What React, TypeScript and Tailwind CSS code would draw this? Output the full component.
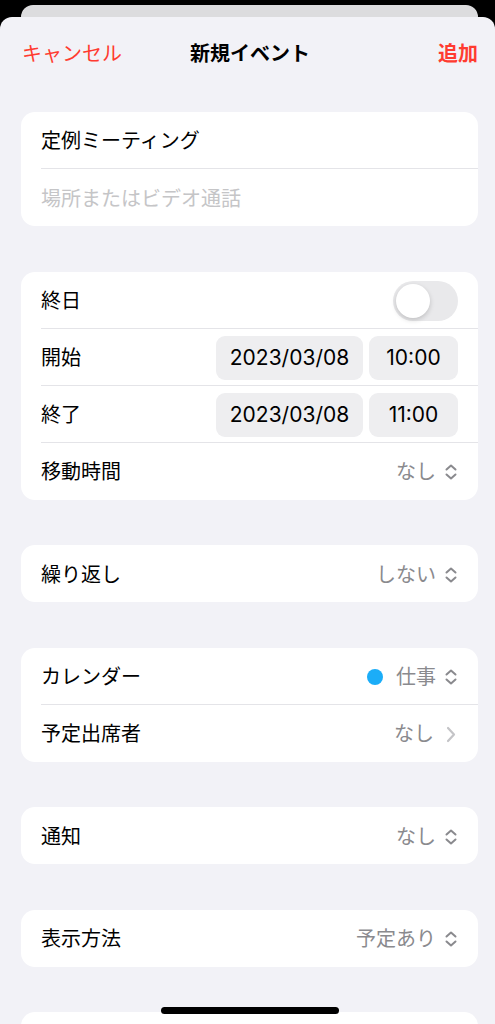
import React from "react";

const font = { fontFamily: '"Inter", "Noto Sans CJK JP", sans-serif' };

function UpDown() {
  return (
    <svg width="14" height="18" viewBox="0 0 14 18" fill="none" className="ml-[8px]">
      <path d="M2.5 6.5L7 2.5L11.5 6.5" stroke="#8a8a8e" strokeWidth="2" strokeLinecap="round" strokeLinejoin="round" />
      <path d="M2.5 11.5L7 15.5L11.5 11.5" stroke="#8a8a8e" strokeWidth="2" strokeLinecap="round" strokeLinejoin="round" />
    </svg>
  );
}

function ChevronRight() {
  return (
    <svg width="10" height="17" viewBox="0 0 10 17" fill="none" className="ml-[12px] mr-[2px]">
      <path d="M2 2L8 8.5L2 15" stroke="#c4c4c7" strokeWidth="2.2" strokeLinecap="round" strokeLinejoin="round" />
    </svg>
  );
}

function Row({ children, last }: { children?: React.ReactNode; last?: boolean }) {
  return (
    <div className="flex h-[57px] flex-col pl-[20px]">
      <div
        className={
          "flex flex-1 items-center pt-[2px] pr-[20px] " + (last ? "" : "border-b border-[#e4e4e8]")
        }
      >
        {children}
      </div>
    </div>
  );
}

function Card({ children }: { children: React.ReactNode }) {
  return <div className="ml-[21px] mr-[17px] overflow-hidden rounded-[14px] bg-white">{children}</div>;
}

function Label({ children }: { children: React.ReactNode }) {
  return <span className="flex-1 text-[20px] text-black">{children}</span>;
}

function Value({ children }: { children: React.ReactNode }) {
  return <span className="text-[20px] text-[#8a8a8e]">{children}</span>;
}

function Pill({ children, w }: { children: React.ReactNode; w: string }) {
  return (
    <div
      className={
        "flex h-[44px] items-center justify-center rounded-[9px] bg-[#eeeef0] text-[21px] text-black " + w
      }
    >
      {children}
    </div>
  );
}

export default function App() {
  return (
    <div className="relative flex h-[1024px] flex-col overflow-hidden bg-black" style={font}>
      <div className="ml-[21px] mr-[17px] mt-[5px] h-[12px] shrink-0 rounded-t-[12px] bg-[#dcdcde]" />
      <div className="flex flex-1 flex-col rounded-t-[12px] bg-[#f2f2f7]">
        <div className="flex h-[72px] shrink-0 items-center justify-between pt-[2px] pl-[22px] pr-[17px]">
          <span className="w-[100px] text-[20px] text-[#ff3b30]">キャンセル</span>
          <span className="text-[20px] font-semibold text-black">新規イベント</span>
          <span className="w-[100px] text-right text-[20px] font-semibold text-[#ff3b30]">追加</span>
        </div>

        <div className="mt-[23px] flex flex-col gap-[45.5px]">
          <Card>
            <Row>
              <Label>定例ミーティング</Label>
            </Row>
            <Row last>
              <span className="flex-1 text-[20px] text-[#c5c5c7]">場所またはビデオ通話</span>
            </Row>
          </Card>

          <Card>
            <Row>
              <Label>終日</Label>
              <div className="flex h-[40px] w-[65px] items-center rounded-full bg-[#e9e9eb] p-[3px]">
                <div className="h-[34px] w-[34px] rounded-full bg-white shadow-[0_2px_5px_rgba(0,0,0,0.18)]" />
              </div>
            </Row>
            <Row>
              <Label>開始</Label>
              <div className="flex gap-[6px]">
                <Pill w="w-[147px]">2023/03/08</Pill>
                <Pill w="w-[89px]">10:00</Pill>
              </div>
            </Row>
            <Row>
              <Label>終了</Label>
              <div className="flex gap-[6px]">
                <Pill w="w-[147px]">2023/03/08</Pill>
                <Pill w="w-[89px]">11:00</Pill>
              </div>
            </Row>
            <Row last>
              <Label>移動時間</Label>
              <Value>なし</Value>
              <UpDown />
            </Row>
          </Card>

          <Card>
            <Row last>
              <Label>繰り返し</Label>
              <Value>しない</Value>
              <UpDown />
            </Row>
          </Card>

          <Card>
            <Row>
              <Label>カレンダー</Label>
              <span className="mr-[13px] h-[16px] w-[16px] rounded-full bg-[#1badf8]" />
              <Value>仕事</Value>
              <UpDown />
            </Row>
            <Row last>
              <Label>予定出席者</Label>
              <Value>なし</Value>
              <ChevronRight />
            </Row>
          </Card>

          <Card>
            <Row last>
              <Label>通知</Label>
              <Value>なし</Value>
              <UpDown />
            </Row>
          </Card>

          <Card>
            <Row last>
              <Label>表示方法</Label>
              <Value>予定あり</Value>
              <UpDown />
            </Row>
          </Card>

          <Card>
            <Row last />
          </Card>
        </div>
      </div>
      <div className="absolute bottom-[10px] left-[161px] h-[7px] w-[178px] rounded-full bg-black" />
    </div>
  );
}
